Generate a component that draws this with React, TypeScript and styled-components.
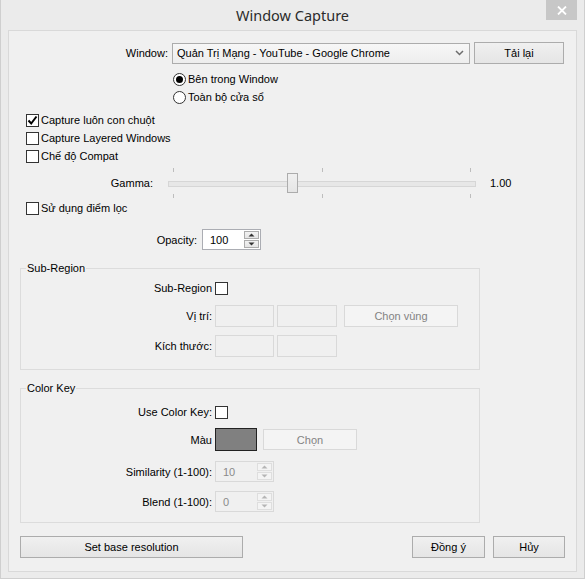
import React from 'react';
import styled, { createGlobalStyle } from 'styled-components';

const Global = createGlobalStyle`
  html, body { margin: 0; padding: 0; background: #eaeaea; }
  body {
    font-family: "Liberation Sans", Arial, sans-serif;
    font-size: 11px;
    color: #000;
  }
  * { box-sizing: border-box; }
`;

const Frame = styled.div`
  width: 585px;
  height: 579px;
  border: 1px solid #cfcfcf;
  border-top: none;
  background: #ebebeb;
  display: flex;
  flex-direction: column;
  padding: 0 7px 6px 7px;
`;

const TitleBar = styled.div`
  height: 30px;
  display: grid;
  grid-template-columns: 31px 1fr 31px;
  align-items: start;
`;

const Title = styled.div`
  grid-column: 2;
  text-align: center;
  font-family: "Noto Sans", sans-serif;
  font-size: 14.5px;
  line-height: 16px;
  padding-top: 7px;
  color: #2b2b2b;
`;

const CloseBtn = styled.div`
  grid-column: 3;
  height: 20px;
  background: #c7c7c7;
  display: flex;
  align-items: center;
  justify-content: center;
`;

const Client = styled.div`
  flex: 1;
  background: #f0f0f0;
  border: 1px solid #d9d9d9;
  display: flex;
  flex-direction: column;
`;

const Row = styled.div<{ $mt?: number; $pl?: number; $h?: number }>`
  display: flex;
  align-items: center;
  margin-top: ${p => p.$mt ?? 0}px;
  padding-left: ${p => p.$pl ?? 0}px;
  height: ${p => (p.$h ? `${p.$h}px` : 'auto')};
`;

const Label = styled.div<{ $w: number; $gap?: number }>`
  width: ${p => p.$w}px;
  margin-right: ${p => p.$gap ?? 4}px;
  text-align: right;
  white-space: nowrap;
  line-height: 16px;
`;

const Select = styled.div`
  width: 298px;
  height: 21px;
  border: 1px solid #acacac;
  background: linear-gradient(#f7f7f7, #ededed);
  display: flex;
  align-items: center;
  justify-content: space-between;
  padding: 0 5px 0 4px;
  margin-right: 4px;
`;

const Button = styled.div<{ $w: number; $disabled?: boolean; $h?: number }>`
  width: ${p => p.$w}px;
  height: ${p => p.$h ?? 22}px;
  border: 1px solid ${p => (p.$disabled ? '#d9d9d9' : '#acacac')};
  background: ${p => (p.$disabled ? '#f4f4f4' : 'linear-gradient(#f0f0f0, #e5e5e5)')};
  color: ${p => (p.$disabled ? '#838383' : '#000')};
  display: flex;
  align-items: center;
  justify-content: center;
  white-space: nowrap;
`;

const OptionRow = styled.div<{ $pl: number }>`
  display: flex;
  align-items: center;
  height: 18px;
  padding-left: ${p => p.$pl}px;
  gap: 2px;
  white-space: nowrap;
`;

const OptionList = styled.div<{ $mt: number }>`
  display: flex;
  flex-direction: column;
  margin-top: ${p => p.$mt}px;
`;

const Radio = styled.div<{ $on?: boolean }>`
  width: 13px;
  height: 13px;
  border-radius: 50%;
  border: 1px solid #333;
  background: #fff;
  display: flex;
  align-items: center;
  justify-content: center;
  &::after {
    content: '';
    width: 7px;
    height: 7px;
    border-radius: 50%;
    background: ${p => (p.$on ? '#000' : 'transparent')};
  }
`;

const Check = styled.div`
  width: 13px;
  height: 13px;
  border: 1px solid #333;
  background: #fff;
  display: flex;
  align-items: center;
  justify-content: center;
  flex: none;
`;

const SliderWrap = styled.div`
  width: 308px;
  height: 30px;
  display: grid;
  grid-template-rows: 4px 1fr 4px;
  margin-right: 14px;
`;

const Ticks = styled.div`
  display: flex;
  justify-content: space-between;
  padding: 0 5px;
`;

const Tick = styled.div`
  width: 1px;
  height: 4px;
  background: #bdbdbd;
`;

const Track = styled.div`
  display: flex;
  align-items: center;
  position: relative;
  &::before {
    content: '';
    position: absolute;
    left: 0;
    right: 0;
    top: 50%;
    height: 4px;
    margin-top: -2px;
    background: #e7e7e7;
    border: 1px solid #d6d6d6;
  }
`;

const Thumb = styled.div`
  position: absolute;
  left: 119px;
  top: 1px;
  width: 11px;
  height: 20px;
  border: 1px solid #acacac;
  background: linear-gradient(#f0f0f0, #e5e5e5);
`;

const Spin = styled.div<{ $disabled?: boolean }>`
  width: 59px;
  height: 21px;
  border: 1px solid ${p => (p.$disabled ? '#d9d9d9' : '#abadb3')};
  background: ${p => (p.$disabled ? '#f0f0f0' : '#fff')};
  display: flex;
  align-items: stretch;
`;

const SpinText = styled.div<{ $disabled?: boolean }>`
  flex: 1;
  padding-left: 7px;
  display: flex;
  align-items: center;
  color: ${p => (p.$disabled ? '#8a8a8a' : '#000')};
`;

const SpinBtns = styled.div`
  width: 16px;
  display: flex;
  flex-direction: column;
  gap: 1px;
  padding: 1px 1px 1px 0;
`;

const SpinBtn = styled.div<{ $disabled?: boolean }>`
  flex: 1;
  border: 1px solid ${p => (p.$disabled ? '#dedede' : '#acacac')};
  background: ${p => (p.$disabled ? '#f4f4f4' : 'linear-gradient(#f2f2f2, #e5e5e5)')};
  display: flex;
  align-items: center;
  justify-content: center;
`;

const Field = styled.div<{ $w: number }>`
  width: ${p => p.$w}px;
  height: 22px;
  border: 1px solid #d9d9d9;
  background: #f0f0f0;
`;

const Group = styled.fieldset<{ $mt: number; $pb: number }>`
  margin: ${p => p.$mt}px 0 0 11px;
  width: 460px;
  padding: 0 0 ${p => p.$pb}px 0;
  border: 1px solid #dcdcdc;
  min-inline-size: 0;
`;

const Legend = styled.legend`
  margin-left: 5px;
  padding: 0 1px;
  line-height: 14px;
`;

const Swatch = styled.div`
  width: 42px;
  height: 23px;
  border: 1px solid #222;
  background: #808080;
  margin-right: 6px;
`;

const Footer = styled.div`
  display: flex;
  align-items: center;
  margin-top: 13px;
  padding: 0 11px;
  gap: 8px;
`;

const Spacer = styled.div`
  flex: 1;
`;

const Gap = styled.div<{ $w: number }>`
  width: ${p => p.$w}px;
  flex: none;
`;

const Arrow = ({ up, disabled }: { up?: boolean; disabled?: boolean }) => (
  <svg width="7" height="4" viewBox="0 0 7 4">
    <path d={up ? 'M0.5 3.5 L3.5 0.5 L6.5 3.5 Z' : 'M0.5 0.5 L3.5 3.5 L6.5 0.5 Z'} fill={disabled ? '#b5b5b5' : '#333'} />
  </svg>
);

const SpinBox = ({ value, disabled }: { value: string; disabled?: boolean }) => (
  <Spin $disabled={disabled}>
    <SpinText $disabled={disabled}>{value}</SpinText>
    <SpinBtns>
      <SpinBtn $disabled={disabled}><Arrow up disabled={disabled} /></SpinBtn>
      <SpinBtn $disabled={disabled}><Arrow disabled={disabled} /></SpinBtn>
    </SpinBtns>
  </Spin>
);

const CheckMark = () => (
  <svg width="11" height="11" viewBox="0 0 11 11">
    <path d="M1.5 5.5 L4.2 8.5 L9.5 1.5" stroke="#000" strokeWidth="2" fill="none" />
  </svg>
);

export default function App() {
  return (
    <>
      <Global />
      <Frame>
        <TitleBar>
          <Title>Window Capture</Title>
          <CloseBtn>
            <svg width="10" height="9" viewBox="0 0 10 9">
              <path d="M1 0.5 L9 8.5 M9 0.5 L1 8.5" stroke="#fff" strokeWidth="1.8" />
            </svg>
          </CloseBtn>
        </TitleBar>
        <Client>
          <Row $mt={11}>
            <Label $w={159}>Window:</Label>
            <Select>
              <span>Quản Trị Mạng - YouTube - Google Chrome</span>
              <svg width="9" height="6" viewBox="0 0 9 6">
                <path d="M1 1 L4.5 4.5 L8 1" stroke="#6d6d6d" strokeWidth="1.5" fill="none" />
              </svg>
            </Select>
            <Button $w={90}>Tải lại</Button>
          </Row>

          <OptionList $mt={6}>
            <OptionRow $pl={164}><Radio $on />Bên trong Window</OptionRow>
            <OptionRow $pl={164}><Radio />Toàn bộ cửa sổ</OptionRow>
          </OptionList>

          <OptionList $mt={5}>
            <OptionRow $pl={17}><Check><CheckMark /></Check>Capture luôn con chuột</OptionRow>
            <OptionRow $pl={17}><Check />Capture Layered Windows</OptionRow>
            <OptionRow $pl={17}><Check />Chế độ Compat</OptionRow>
          </OptionList>

          <Row $mt={3}>
            <Label $w={144} $gap={15}>Gamma:</Label>
            <SliderWrap>
              <Ticks><Tick /><Tick /><Tick /></Ticks>
              <Track><Thumb /></Track>
              <Ticks><Tick /><Tick /><Tick /></Ticks>
            </SliderWrap>
            <span>1.00</span>
          </Row>

          <OptionList $mt={1}>
            <OptionRow $pl={17}><Check />Sử dụng điểm lọc</OptionRow>
          </OptionList>

          <Row $mt={12}>
            <Label $w={188} $gap={5}>Opacity:</Label>
            <SpinBox value="100" />
          </Row>

          <Group $mt={11} $pb={12}>
            <Legend>Sub-Region</Legend>
            <Row $mt={4} $h={18}>
              <Label $w={191} $gap={3}>Sub-Region</Label>
              <Check />
            </Row>
            <Row $mt={8}>
              <Label $w={191} $gap={3}>Vị trí:</Label>
              <Field $w={59} />
              <Gap $w={3} />
              <Field $w={60} />
              <Gap $w={7} />
              <Button $w={114} $disabled>Chọn vùng</Button>
            </Row>
            <Row $mt={8}>
              <Label $w={191} $gap={3}>Kích thước:</Label>
              <Field $w={59} />
              <Gap $w={3} />
              <Field $w={60} />
            </Row>
          </Group>

          <Group $mt={11} $pb={10}>
            <Legend>Color Key</Legend>
            <Row $mt={8} $h={18}>
              <Label $w={191} $gap={3}>Use Color Key:</Label>
              <Check />
            </Row>
            <Row $mt={7}>
              <Label $w={191} $gap={3}>Màu</Label>
              <Swatch />
              <Button $w={94} $h={21} $disabled>Chọn</Button>
            </Row>
            <Row $mt={10}>
              <Label $w={191} $gap={3}>Similarity (1-100):</Label>
              <SpinBox value="10" disabled />
            </Row>
            <Row $mt={9}>
              <Label $w={191} $gap={3}>Blend (1-100):</Label>
              <SpinBox value="0" disabled />
            </Row>
          </Group>

          <Footer>
            <Button $w={223}>Set base resolution</Button>
            <Spacer />
            <Button $w={73}>Đồng ý</Button>
            <Button $w={72}>Hủy</Button>
          </Footer>
        </Client>
      </Frame>
    </>
  );
}
